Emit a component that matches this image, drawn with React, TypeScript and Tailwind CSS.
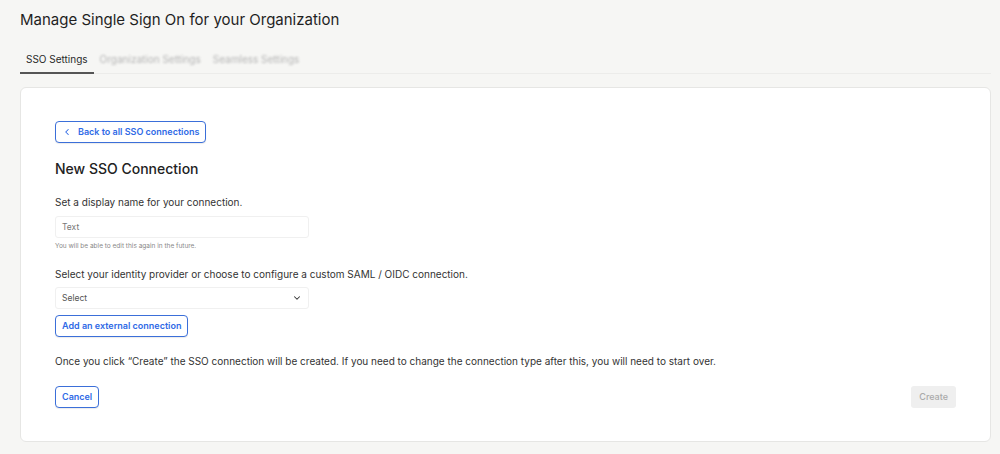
import { ChevronLeft, ChevronDown } from "lucide-react";

function OutlineButton({ children }: { children: React.ReactNode }) {
  return (
    <button className="h-[22px] rounded-[4px] border border-[#3b6fd9] bg-white px-[6px] text-[9px] font-semibold text-[#2f6ae6] flex items-center gap-[6px] shadow-[0_1px_1px_rgba(0,0,0,0.08)]">
      {children}
    </button>
  );
}

export default function App() {
  return (
    <div className="min-h-[454px] w-full bg-[#f6f6f4] pl-5 pr-[9px] pt-[10px] font-['Inter',sans-serif] text-[#222]">
      <h1 className="text-[15px] leading-[20px] text-[#1f1f1f]">Manage Single Sign On for your Organization</h1>

      {/* Tabs */}
      <div className="mt-[22px] flex border-b border-[#ececea]">
        <div className="-mb-px border-b-2 border-[#555] px-[6px] pb-[6px] text-[10px] leading-[14px] text-[#2a2a2a]">SSO Settings</div>
        <div className="px-[6px] pb-[6px] text-[10px] leading-[14px] text-[#b4b4b4] blur-[1px]">Organization Settings</div>
        <div className="px-[6px] pb-[6px] text-[10px] leading-[14px] text-[#b4b4b4] blur-[1px]">Seamless Settings</div>
      </div>

      <div className="mt-[13px] rounded-[6px] border border-[#e6e6e4] bg-white px-[34px] pt-[33px] pb-[33px]">
        <OutlineButton>
          <ChevronLeft size={10} strokeWidth={2.5} />
          Back to all SSO connections
        </OutlineButton>

        <h2 className="mt-[16px] text-[14px] font-medium leading-[20px] text-[#222]">New SSO Connection</h2>

        <p className="mt-[16px] text-[10px] leading-[14px] text-[#333]">Set a display name for your connection.</p>
        <div className="mt-[7px] flex h-[22px] w-[254px] items-center rounded-[3px] border border-[#f0f0f0] px-[6px] text-[8.5px] text-[#777]">Text</div>
        <p className="mt-[3px] text-[6.5px] leading-[10px] text-[#888]">You will be able to edit this again in the future.</p>

        <p className="mt-[16px] text-[10px] leading-[14px] text-[#333]">Select your identity provider or choose to configure a custom SAML / OIDC connection.</p>
        <div className="mt-[6px] flex h-[22px] w-[254px] items-center justify-between rounded-[3px] border border-[#f0f0f0] px-[6px] text-[8.5px] text-[#555]">
          <span>Select</span>
          <ChevronDown size={10} strokeWidth={2.5} className="text-[#333]" />
        </div>
        <div className="mt-[6px]">
          <OutlineButton>Add an external connection</OutlineButton>
        </div>

        <p className="mt-[17px] text-[10px] leading-[14px] text-[#333]">
          Once you click “Create” the SSO connection will be created. If you need to change the connection type after this, you will need to start over.
        </p>

        <div className="mt-[18px] flex items-center justify-between">
          <OutlineButton>Cancel</OutlineButton>
          <button className="h-[22px] rounded-[3px] bg-[#efefef] px-[8px] text-[9px] font-medium text-[#aaa]">Create</button>
        </div>
      </div>
    </div>
  );
}
